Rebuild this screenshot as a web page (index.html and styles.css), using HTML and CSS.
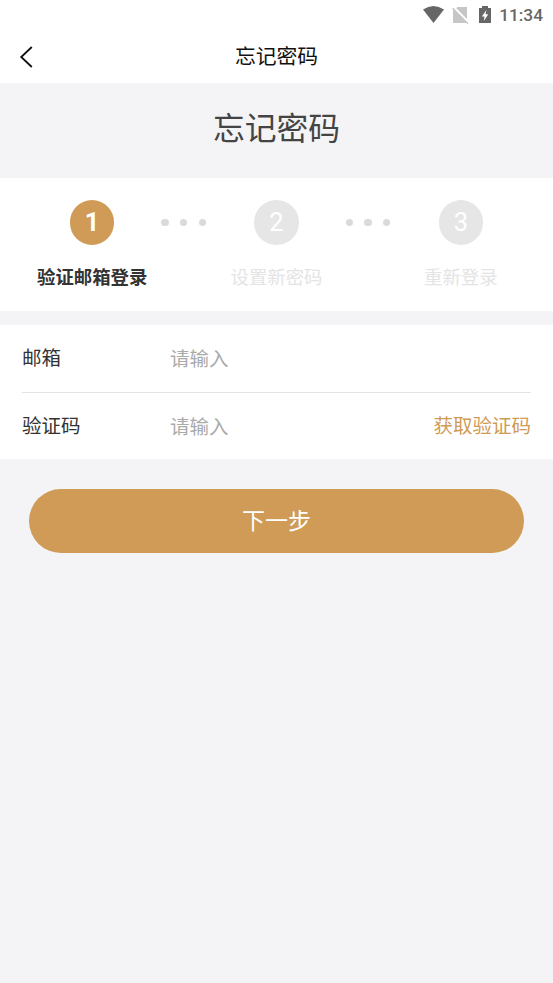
FILE: index.html
```html
<!DOCTYPE html>
<html lang="zh-CN">
<head>
<meta charset="utf-8">
<title>忘记密码</title>
<link rel="stylesheet" href="styles.css">
</head>
<body>
<div class="status">
  <svg width="74" height="24" viewBox="0 0 74 24">
    <path d="M0 9.500Q10.500 2.500 21 9.500L10.500 23Z" fill="#666"/>
    <path d="M34.500 7H44V19L33.300 8.200Z" fill="#c6c6c6"/>
    <path d="M30 8.500L43.500 22.500Q43.300 23 42.500 23H30Z" fill="#c6c6c6"/>
    <path d="M29.500 8L45 23.700" stroke="#c6c6c6" stroke-width="1.300"/>
    <path d="M56 8H59V6H65V8H68V23H56Z" fill="#666"/>
    <path d="M63.500 10L58.800 16.500H61.500L60.800 21L65.300 14.300H62.500Z" fill="#fff"/>
  </svg>
  <span class="time">11:34</span>
</div>
<header class="nav">
  <svg class="back" width="14" height="22" viewBox="0 0 14 22"><path d="M12.800 1L2.200 11L12.800 21" fill="none" stroke="#111" stroke-width="1.800"/></svg>
  <span>忘记密码</span>
</header>
<h1 class="heading">忘记密码</h1>
<section class="steps">
  <div class="step active"><b class="num">1</b><span class="label">验证邮箱登录</span></div>
  <div class="step"><i class="dots"><i></i><i></i><i></i></i><b class="num">2</b><span class="label">设置新密码</span></div>
  <div class="step"><i class="dots"><i></i><i></i><i></i></i><b class="num">3</b><span class="label">重新登录</span></div>
</section>
<section class="form">
  <div class="row"><span class="name">邮箱</span><span class="input">请输入</span></div>
  <div class="row"><span class="name">验证码</span><span class="input">请输入</span><span class="code">获取验证码</span></div>
</section>
<button class="next">下一步</button>
</body>
</html>
```
FILE: styles.css
```css
* { box-sizing: border-box; }
body {
  margin: 0;
  min-height: 983px;
  background: #f4f4f6;
  color: #333;
  font-family: Roboto, "Noto Sans CJK SC", sans-serif;
}
.status {
  height: 30px;
  display: flex;
  justify-content: flex-end;
  padding-right: 10px;
  background: #fff;
}
.time {
  width: 46px;
  text-align: right;
  font-size: 17.3px;
  line-height: 31px;
  font-weight: 500;
  color: #666;
}
.nav {
  height: 53px;
  display: flex;
  align-items: center;
  justify-content: center;
  position: relative;
  background: #fff;
  color: #111;
  font-size: 20.8px;
  line-height: 53px;
}
.nav span { padding-top: 1px; }
.back { position: absolute; left: 19px; top: 16px; }
.heading {
  margin: 0;
  height: 95px;
  line-height: 93px;
  text-align: center;
  font-size: 31.8px;
  font-weight: 400;
  color: #444;
}
.steps {
  height: 133px;
  display: grid;
  grid-template-columns: repeat(3, 1fr);
  background: #fff;
}
.step {
  position: relative;
  display: flex;
  flex-direction: column;
  align-items: center;
  padding-top: 22px;
  color: #e4e4e4;
}
.num {
  width: 44.5px;
  height: 44.5px;
  border-radius: 50%;
  background: #e6e6e6;
  color: #fff;
  text-align: center;
  font-size: 25.5px;
  line-height: 45px;
  font-weight: 400;
}
.label { margin-top: 19px; font-size: 18.4px; line-height: 28px; }
.active { color: #333; }
.active .num { background: #cf9b56; font-weight: 700; }
.active .label { font-weight: 700; }
.dots {
  position: absolute;
  left: -23px;
  top: 41px;
  display: flex;
  gap: 11.5px;
}
.dots i { width: 7.2px; height: 7.2px; border-radius: 50%; background: #dadada; }
.form {
  margin-top: 14.4px;
  height: 134px;
  padding: 0 22px;
  background: #fff;
}
.row {
  height: 67px;
  display: flex;
  font-size: 19.5px;
  line-height: 66px;
}
.row:first-child { height: 66.6px; }
.row + .row { border-top: 1px solid #e3e3e3; }
.row span { padding-top: 1px; }
.row .input { color: #aaa; padding-top: 2px; }
.name { width: 148px; }
.code { margin-left: auto; color: #cf9b56; }
.next {
  display: block;
  width: 495px;
  height: 64px;
  margin: 29.6px auto 0;
  padding: 2px 0 0;
  border: 0;
  border-radius: 32px;
  background: #cf9b56;
  color: #fff;
  font: 400 23px/62px Roboto, "Noto Sans CJK SC", sans-serif;
}
```
